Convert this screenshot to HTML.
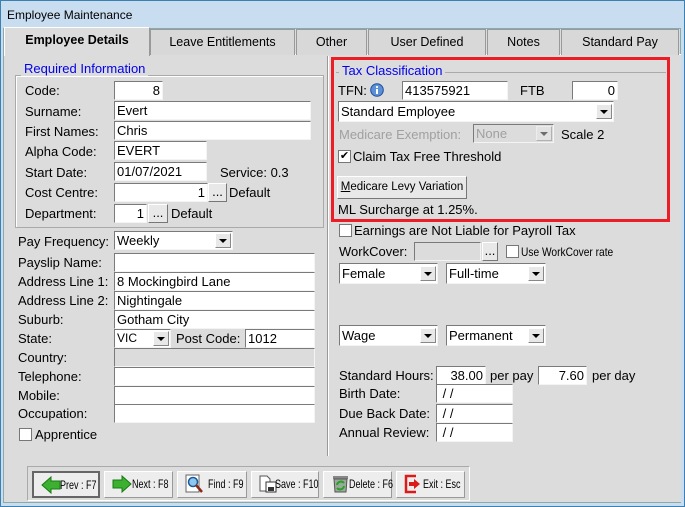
<!DOCTYPE html>
<html><head><meta charset="utf-8"><style>
*{box-sizing:border-box;margin:0;padding:0}
body{width:685px;height:507px;overflow:hidden;background:#dcdcdc;font-family:"Liberation Sans",sans-serif;font-size:13px;color:#000;position:relative}
.a{position:absolute;white-space:nowrap}
.win{position:absolute;left:0;top:0;width:685px;height:507px;border:1px solid #3c7fb1;background:#c9ddf0}
.inner{position:absolute;left:3px;top:28px;width:678px;height:475px;background:#dcdcdc;border:1px solid #8aa;}
.in{position:absolute;background:#fff;border-top:1px solid #7a7a7a;border-left:1px solid #7a7a7a;border-bottom:1px solid #f4f4f4;border-right:1px solid #f4f4f4;height:19px;padding:1px 2px;line-height:15px;font-size:13px;overflow:hidden;white-space:nowrap}
.r{text-align:right}
.dis{background:#dcdcdc}
.dd{position:absolute;right:1px;top:1px;width:16px;height:15px;background:#e8e8e8;border:1px solid #888;border-top-color:#fff;border-left-color:#fff}
.dd:after{content:"";position:absolute;left:3px;top:5px;border-left:4px solid transparent;border-right:4px solid transparent;border-top:4px solid #000}
.btn{position:absolute;background:#e8e8e8;border:1px solid #777;border-top-color:#fff;border-left-color:#fff;text-align:center;line-height:15px;white-space:nowrap}
.tab{position:absolute;top:29px;height:26px;background:#d8d8d8;border:1px solid #999;border-bottom:none;text-align:center;line-height:24px;font-size:12.5px}
.grp{position:absolute;border:1px solid #aaa;box-shadow:1px 1px 0 #fff inset}
.gt{position:absolute;background:#dcdcdc;color:#0000ee;padding:0 3px;font-size:13px;line-height:14px}
.cb{position:absolute;width:13px;height:13px;background:#fff;border:1px solid #777}
.bb{position:absolute;top:471px;height:27px;background:#ededed;border:1px solid #999;border-top-color:#fff;border-left-color:#fff;font-size:12px;line-height:25px;white-space:nowrap}
.bb svg{position:absolute;left:6px;top:2px}
.bb span{position:absolute;top:0;white-space:nowrap;transform:scaleX(0.75);transform-origin:0 0}
</style></head><body>
<div class="win"></div>
<div class="a" style="left:7px;top:8px;font-size:12px">Employee Maintenance</div>
<div class="inner"></div>
<div class="a" style="left:4px;top:54px;width:677px;height:448px;background:#dcdcdc;border-top:1px solid #fff"></div>
<div class="tab" style="left:150px;width:145px">Leave Entitlements</div>
<div class="tab" style="left:296px;width:71px">Other</div>
<div class="tab" style="left:368px;width:118px">User Defined</div>
<div class="tab" style="left:487px;width:73px">Notes</div>
<div class="tab" style="left:561px;width:118px">Standard Pay</div>
<div class="tab" style="left:4px;top:27px;height:29px;width:146px;background:#dcdcdc;font-weight:bold;border-color:#fff #999 #dcdcdc #fff">Employee Details</div>

<div class="a" style="left:327px;top:56px;width:2px;height:400px;border-left:1px solid #999;border-right:1px solid #fff"></div>

<div class="grp" style="left:15px;top:75px;width:309px;height:153px"></div>
<div class="gt" style="left:21px;top:62px">Required Information</div>
<div class="a" style="left:25px;top:83px">Code:</div><div class="in r" style="left:114px;top:81px;width:49px">8</div>
<div class="a" style="left:25px;top:104px">Surname:</div><div class="in" style="left:114px;top:101px;width:197px">Evert</div>
<div class="a" style="left:25px;top:124px">First Names:</div><div class="in" style="left:114px;top:121px;width:197px">Chris</div>
<div class="a" style="left:25px;top:144px">Alpha Code:</div><div class="in" style="left:114px;top:141px;width:93px">EVERT</div>
<div class="a" style="left:25px;top:165px">Start Date:</div><div class="in" style="left:114px;top:162px;width:93px">01/07/2021</div>
<div class="a" style="left:220px;top:165px">Service: 0.3</div>
<div class="a" style="left:25px;top:185px">Cost Centre:</div><div class="in r" style="left:114px;top:183px;width:94px">1</div>
<div class="btn" style="left:208px;top:183px;width:19px;height:19px">...</div><div class="a" style="left:229px;top:185px">Default</div>
<div class="a" style="left:25px;top:206px">Department:</div><div class="in r" style="left:114px;top:204px;width:33px">1</div>
<div class="btn" style="left:148px;top:204px;width:20px;height:19px">...</div><div class="a" style="left:171px;top:206px">Default</div>

<div class="a" style="left:18px;top:234px">Pay Frequency:</div><div class="in" style="left:114px;top:231px;width:119px">Weekly<div class="dd"></div></div>
<div class="a" style="left:18px;top:255px">Payslip Name:</div><div class="in" style="left:114px;top:253px;width:201px"></div>
<div class="a" style="left:18px;top:274px">Address Line 1:</div><div class="in" style="left:114px;top:272px;width:201px">8 Mockingbird Lane</div>
<div class="a" style="left:18px;top:293px">Address Line 2:</div><div class="in" style="left:114px;top:291px;width:201px">Nightingale</div>
<div class="a" style="left:18px;top:312px">Suburb:</div><div class="in" style="left:114px;top:310px;width:201px">Gotham City</div>
<div class="a" style="left:18px;top:331px">State:</div><div class="in" style="left:114px;top:329px;width:57px;font-size:12px">VIC<div class="dd"></div></div>
<div class="a" style="left:176px;top:331px">Post Code:</div><div class="in" style="left:245px;top:329px;width:70px">1012</div>
<div class="a" style="left:18px;top:350px">Country:</div><div class="in dis" style="left:114px;top:348px;width:201px"></div>
<div class="a" style="left:18px;top:369px">Telephone:</div><div class="in" style="left:114px;top:367px;width:201px"></div>
<div class="a" style="left:18px;top:388px">Mobile:</div><div class="in" style="left:114px;top:386px;width:201px"></div>
<div class="a" style="left:18px;top:406px">Occupation:</div><div class="in" style="left:114px;top:404px;width:201px"></div>
<div class="cb" style="left:19px;top:428px"></div><div class="a" style="left:35px;top:427px">Apprentice</div>

<div class="a" style="left:331px;top:57px;width:339px;height:165px;border:3px solid #ee1c25"></div>
<div class="grp" style="left:336px;top:72px;width:330px;height:1px;border-width:1px 0 0 0"></div>
<div class="gt" style="left:339px;top:64px">Tax Classification</div>
<div class="a" style="left:338px;top:83px">TFN:</div>
<svg class="a" style="left:370px;top:83px" width="14" height="14"><circle cx="7" cy="7" r="6.3" fill="#5b8fd6" stroke="#1e4f9c"/><rect x="6" y="6" width="2" height="5" fill="#fff"/><circle cx="7" cy="4" r="1.1" fill="#fff"/></svg>
<div class="in" style="left:402px;top:81px;width:106px">413575921</div>
<div class="a" style="left:520px;top:83px">FTB</div>
<div class="in r" style="left:572px;top:81px;width:46px">0</div>
<div class="in" style="left:338px;top:101px;width:276px;height:21px;padding-top:2px">Standard Employee<div class="dd" style="top:2px"></div></div>
<div class="a" style="left:339px;top:127px;color:#a0a0a0">Medicare Exemption:</div>
<div class="in dis" style="left:473px;top:124px;width:81px;color:#a0a0a0">None<div class="dd" style="opacity:.5"></div></div>
<div class="a" style="left:561px;top:127px">Scale 2</div>
<div class="cb" style="left:338px;top:150px;font-size:11px;line-height:10px;text-align:center">✔</div>
<div class="a" style="left:353px;top:149px">Claim Tax Free Threshold</div>
<div class="btn" style="left:337px;top:176px;width:130px;height:23px;line-height:21px;font-size:11.5px"><u>M</u>edicare Levy Variation</div>
<div class="a" style="left:338px;top:202px">ML Surcharge at 1.25%.</div>

<div class="cb" style="left:339px;top:224px"></div><div class="a" style="left:354px;top:223px">Earnings are Not Liable for Payroll Tax</div>
<div class="a" style="left:339px;top:244px">WorkCover:</div>
<div class="in dis" style="left:414px;top:242px;width:67px"></div>
<div class="btn" style="left:482px;top:242px;width:16px;height:19px">...</div>
<div class="cb" style="left:506px;top:245px"></div><div class="a" style="left:521px;top:245px;font-size:12px;transform:scaleX(.85);transform-origin:0 0">Use WorkCover rate</div>
<div class="in" style="left:339px;top:263px;width:99px;height:21px;padding-top:2px">Female<div class="dd" style="top:2px"></div></div>
<div class="in" style="left:446px;top:263px;width:100px;height:21px;padding-top:2px">Full-time<div class="dd" style="top:2px"></div></div>
<div class="in" style="left:339px;top:325px;width:99px;height:21px;padding-top:2px">Wage<div class="dd" style="top:2px"></div></div>
<div class="in" style="left:446px;top:325px;width:100px;height:21px;padding-top:2px">Permanent<div class="dd" style="top:2px"></div></div>
<div class="a" style="left:339px;top:368px">Standard Hours:</div>
<div class="in r" style="left:436px;top:366px;width:50px">38.00</div>
<div class="a" style="left:490px;top:368px">per pay</div>
<div class="in r" style="left:538px;top:366px;width:49px">7.60</div>
<div class="a" style="left:592px;top:368px">per day</div>
<div class="a" style="left:339px;top:386px">Birth Date:</div><div class="in" style="left:436px;top:384px;width:77px">&nbsp;/ /</div>
<div class="a" style="left:339px;top:406px">Due Back Date:</div><div class="in" style="left:436px;top:404px;width:77px">&nbsp;/ /</div>
<div class="a" style="left:339px;top:425px">Annual Review:</div><div class="in" style="left:436px;top:423px;width:77px">&nbsp;/ /</div>

<div class="a" style="left:27px;top:466px;width:443px;height:35px;border:1px solid #aaa;border-right-color:#fff;border-bottom-color:#fff"></div>
<div class="bb" style="left:32px;width:68px;border:2px solid #666"><svg width="22" height="20"><path d="M2 10 L11 2 V6 H20 V14 H11 V18 Z" fill="#3cb030" stroke="#1a7a14"/></svg><span style="left:26px">Prev : F7</span></div>
<div class="bb" style="left:104px;width:69px"><svg width="22" height="20"><path d="M20 10 L11 2 V6 H2 V14 H11 V18 Z" fill="#3cb030" stroke="#1a7a14"/></svg><span style="left:27px">Next : F8</span></div>
<div class="bb" style="left:177px;width:70px"><svg width="22" height="20"><rect x="2" y="1" width="13" height="17" fill="#fff" stroke="#666"/><circle cx="9" cy="8" r="4.5" fill="#8ec8f0" stroke="#1a5a9a" stroke-width="1.5"/><path d="M12 11 L18 18" stroke="#8a2a1a" stroke-width="2.5"/></svg><span style="left:30px">Find : F9</span></div>
<div class="bb" style="left:251px;width:68px"><svg width="22" height="20"><path d="M2 2 H9 L12 5 V17 H2 Z" fill="#fff" stroke="#555"/><rect x="8" y="8" width="10" height="10" fill="#fff" stroke="#333"/><rect x="10" y="13" width="6" height="4" fill="#333"/></svg><span style="left:23px">Save : F10</span></div>
<div class="bb" style="left:323px;width:69px"><svg width="22" height="20"><rect x="3" y="2" width="15" height="3" fill="#888"/><path d="M4 5 H17 L16 18 H5 Z" fill="#9aaa9a" stroke="#555"/><path d="M7 11 A4 4 0 0 1 14 9 M14 12 A4 4 0 0 1 7 14" stroke="#2aa02a" stroke-width="2" fill="none"/></svg><span style="left:25px">Delete : F6</span></div>
<div class="bb" style="left:396px;width:69px"><svg width="22" height="20"><path d="M13 2 H3 V18 H13" stroke="#dd1a1a" stroke-width="2.5" fill="none"/><path d="M6 8 H11 V5 L17 10 L11 15 V12 H6 Z" fill="#dd1a1a"/></svg><span style="left:26px">Exit : Esc</span></div>
</body></html>
